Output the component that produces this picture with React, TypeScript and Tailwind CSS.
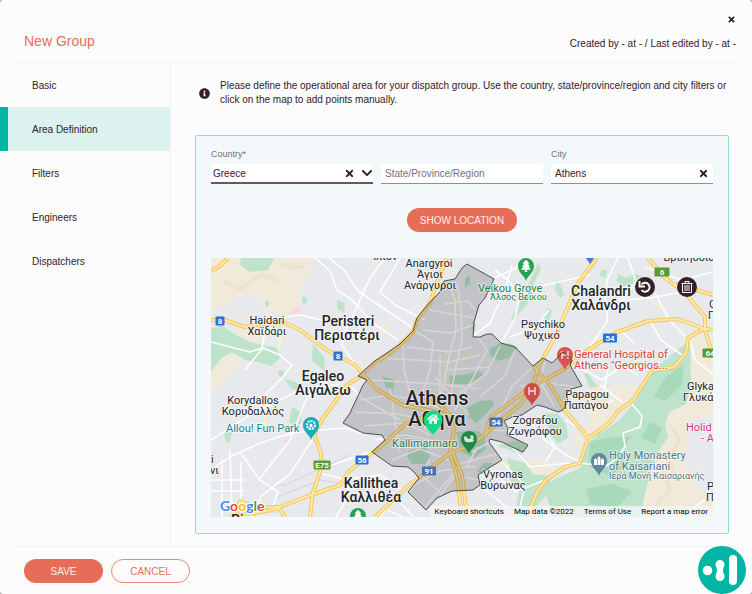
import React from 'react';
import { FaTimes, FaChevronDown, FaInfoCircle, FaHome, FaTree } from 'react-icons/fa';

const tabs = ['Basic', 'Area Definition', 'Filters', 'Engineers', 'Dispatchers'];

const sandAreas = [
  'M211 258H315L311 270 302 285 300 300 292 312 272 313 262 305 255 293 238 297 222 306 211 310Z',
  'M211 357L226 352 242 357 241 366 230 373 221 388 211 390Z',
  'M231 326L246 330 258 336 262 345 246 341Z',
  'M588 386H640L620 412 600 430 585 447 573 449 574 438 590 422Z',
  'M684 338L696 330 706 345 713 352V517H640L650 470 664 440Z',
  'M519 463L534 458 552 463 550 476 528 474Z',
  'M448 358L462 355 473 350 470 357 452 362Z',
  'M449 296L459 292 459 305 455 308Z',
  'M378 324L390 323 388 331 382 331Z',
];

const greenAreas = [
  'M241 258H274L268 270 250 272 240 265Z',
  'M211 329L222 325 234 334 250 342 262 345 277 348 280 358 271 366 258 362 245 360 232 352 222 357 211 372Z',
  'M313 344L319 351 324 357 325 372 312 360Z',
  'M265 302L269 300 269 306 266 307Z',
  'M302 296L307 298 306 304 302 303Z',
  'M337 300L345 303 344 313 337 309Z',
  'M278 370L284 371 284 378 279 376Z',
  'M284 379L296 382 303 390 292 389Z',
  'M292 407L300 412 302 423 294 427 289 421Z',
  'M224 433L232 432 229 444 225 439Z',
  'M538 263L541 269 535 281 530 294 527 305 520 312 513 322 511 318 519 304 527 288Z',
  'M547 307L552 311 549 321 544 320 546 313Z',
  'M556 280L561 285 564 295 560 298 555 290Z',
  'M602 269L607 271 606 278 599 276Z',
  'M618 274L626 278 634 274 642 276 634 284 624 286 617 281Z',
  'M584 374L588 372 594 382 598 387 590 388Z',
  'M545 413L558 414 566 424 568 438 558 444 550 434Z',
  'M507 458L525 463 533 474 550 476 552 490 540 502 530 517H514L519 492 511 482Z',
  'M496 446L518 440 528 446 520 456 508 449Z',
  'M690 340L691 386 686 404 669 412 665 424 668 437 656 455 649 478 644 498 640 517H553L546 494 553 480 580 468 586 445 600 433 620 420 636 400 646 382 658 366Z',
];

const darkGreenAreas = [
  'M590 442L606 438 632 436 620 450 626 465 610 476 588 466Z',
  'M586 489L612 484 632 491 617 508 590 504Z',
  'M665 378L684 364 682 385 665 401 654 397Z',
  'M650 422L662 428 655 444 641 438Z',
];

const parksInside = [
  'M449 376L462 375 480 371 484 376 473 384 450 384Z',
  'M490 349L500 343 512 344 518 348 509 358 497 361 490 355Z',
  'M465 279L470 275 470 284 465 287Z',
  'M472 322L476 325 475 331 471 329Z',
  'M467 408L480 401 492 400 494 405 486 414 476 423 469 417Z',
  'M409 451L425 447 430 455 425 464 412 464 407 457Z',
  'M456 432L478 431 485 438 486 449 474 458 461 452Z',
  'M382 376L394 380 393 391 386 387Z',
  'M483 463L493 463 485 474 477 472Z',
];

const minorRoads = [
  'M315 258L330 271 337 290 352 300 374 324 398 340',
  'M329 258L345 271 358 291 380 306 416 330',
  'M385 258L370 278 360 300 345 332 342 345 360 372',
  'M400 258L380 292 395 305 425 320',
  'M211 470C235 450 280 435 300 432L345 428 365 434',
  'M211 440L250 415 300 390 340 384',
  'M211 342L250 352 262 348 265 330 280 318 300 315 330 322',
  'M245 370L263 348 280 355 292 365 282 378 262 398 240 414',
  'M211 480H245M211 491H244M222 460V517M230 450L232 510M241 462V500',
  'M250 517L262 495 290 474 312 440',
  'M240 452L260 480 278 492 272 509',
  'M260 478L290 440 306 400 317 385',
  'M322 474L350 480 345 502 336 517M332 465L370 452',
  'M350 386L365 400 400 420M340 480L380 475 405 492',
  'M380 517L395 495M388 510L402 517M400 503L414 517',
  'M445 304L468 301 475 310M472 337L490 323 505 290 512 265',
  'M494 278L512 270 530 258M502 342L515 318 520 296 545 285 590 275',
  'M520 296L508 280 495 270M510 337L535 328 549 310',
  'M585 305L600 306 618 300 650 298 682 292',
  'M590 346L607 322 608 303M620 330L635 344M650 321L661 340 682 355',
  'M618 258L607 280 605 303M628 258L636 282 615 309',
  'M645 267L682 280 713 272M655 293L670 321 686 337',
  'M590 350L608 370 604 390M578 367L602 380 622 366 638 375',
  'M600 385L622 402M614 400L590 412',
  'M525 415L545 440 566 455 580 462M512 447L530 467 570 463',
  'M490 470L515 492 545 480M482 487L510 510M500 460L525 485 518 517',
  'M545 430L555 447 545 462M566 420L582 430',
  'M632 404L642 416 640 427 623 433 625 447 615 460 606 466 580 463',
  'M690 510L705 500M690 340L695 360 713 374',
];

const cityRoads = [
  'M447 281L455 300 456 330 449 357 443 390 424 430',
  'M457 283L461 308 462 340 455 370 450 402',
  'M430 310L458 315 474 318M423 330L450 333 473 325M407 347L450 352 473 347',
  'M415 331L433 342 430 370 420 400M403 345L404 370 412 401',
  'M380 358L416 360 450 362 480 355M370 380L404 382 440 384 478 389',
  'M360 400L390 395 425 402 450 412M355 412L398 414 430 421',
  'M365 426L405 423 430 435M375 440L405 435 440 442M392 460L420 449 448 460',
  'M478 337L487 350 472 380 455 410M500 346L486 374 460 393',
  'M515 350L505 376 480 397M533 367L512 386 498 416 485 430',
  'M410 487L440 471 475 466M425 507L448 480 462 463 497 454',
  'M421 475L442 494M410 492L430 460M440 496L455 475 478 480',
  'M545 362L540 382 555 407M520 386L550 383 575 387',
  'M491 430L516 431M472 452L490 442M466 467L478 447',
  'M390 388L399 450M440 355L440 395M445 370L490 367M435 377L469 415',
];

const highways = [
  'M211 320H225L245 327 262 324 285 323 300 330 325 349 340 357 355 365 375 388 402 405 438 412 452 417',
  'M211 271L220 266 228 258',
  'M447 258L438 280 430 303 417 320 413 332 400 345 385 357 375 362 358 378 347 385 327 413Q314 430 315 437L321 453Q322 463 320 472L313 492 310 517',
  'M230 517L272 510 308 496 340 485 348 472 385 443 405 424 430 414',
  'M375 517L408 486 450 453 454 430 450 415 438 403 420 400',
  'M450 453L457 478 462 517M453 453L462 475 467 517',
  'M450 453L466 447 485 435 497 423 520 405 533 385 538 367 555 337 578 283 597 258',
  'M485 435L491 417 512 401 532 386 545 380 567 367 588 350 617 332 648 321 678 319 702 328 713 330',
  'M533 366L550 385 565 410 588 438',
  'M648 258L664 277 685 293 705 317V330L710 346Q713 352 709 358',
  'M675 284L697 290 713 295',
  'M705 328L688 338 686 353 674 367 652 371 642 386 633 400 617 412 612 420 600 430 588 438 580 463 565 467 546 480 537 492 527 517',
  'M236 517L240 501 258 508 278 507 285 517',
];

type Label = { x: number; y: number; text: string; size?: 'lg' | 'xl' | 'sm'; color?: string; start?: boolean };

const labels: Label[] = [
  { x: 385, y: 260, text: 'Ίλιον' },
  { x: 429, y: 267, text: 'Anargyroi' },
  { x: 430, y: 278, text: 'Άγιοι' },
  { x: 430, y: 289, text: 'Ανάργυροι' },
  { x: 478, y: 292, text: 'Veikou Grove', color: '#188544', start: true },
  { x: 490, y: 300, text: 'Άλσος Βεΐκου', color: '#188544', size: 'sm', start: true },
  { x: 601, y: 296, text: 'Chalandri', size: 'lg' },
  { x: 601, y: 310, text: 'Χαλάνδρι', size: 'lg' },
  { x: 689, y: 261, text: 'Βριλήσσια' },
  { x: 267, y: 324, text: 'Haidari' },
  { x: 267, y: 335, text: 'Χαϊδάρι' },
  { x: 348, y: 326, text: 'Peristeri', size: 'lg' },
  { x: 347, y: 340, text: 'Περιστέρι', size: 'lg' },
  { x: 323, y: 381, text: 'Egaleo', size: 'lg' },
  { x: 323, y: 395, text: 'Αιγάλεω', size: 'lg' },
  { x: 543, y: 328, text: 'Psychiko' },
  { x: 542, y: 339, text: 'Ψυχικό' },
  { x: 574, y: 358, text: 'General Hospital of', color: '#d9413c', start: true },
  { x: 574, y: 369, text: 'Athens "Georgios...', color: '#d9413c', start: true },
  { x: 587, y: 398, text: 'Papagou' },
  { x: 586, y: 409, text: 'Παπάγου' },
  { x: 437, y: 405, text: 'Athens', size: 'xl' },
  { x: 437, y: 426, text: 'Αθήνα', size: 'xl' },
  { x: 535, y: 424, text: 'Zografou' },
  { x: 535, y: 435, text: 'Ζωγράφου' },
  { x: 392, y: 447, text: 'Kallimarmaro', color: '#2f7d4f', start: true },
  { x: 503, y: 478, text: 'Vyronas' },
  { x: 503, y: 489, text: 'Βύρωνας' },
  { x: 371, y: 488, text: 'Kallithea', size: 'lg' },
  { x: 371, y: 502, text: 'Καλλιθέα', size: 'lg' },
  { x: 253, y: 404, text: 'Korydallos' },
  { x: 253, y: 415, text: 'Κορυδαλλός' },
  { x: 226, y: 432, text: 'Allou! Fun Park', color: '#138a94', start: true },
  { x: 609, y: 459, text: 'Holy Monastery', color: '#58748a', start: true },
  { x: 609, y: 470, text: 'of Kaisariani', color: '#58748a', start: true },
  { x: 609, y: 479, text: 'Ιερά Μονή Καισαριανής', color: '#58748a', size: 'sm', start: true },
  { x: 687, y: 390, text: 'Glyka', start: true },
  { x: 683, y: 401, text: 'Γλυκά', start: true },
  { x: 686, y: 431, text: 'Holid', color: '#e6317c', start: true },
  { x: 701, y: 442, text: '- A', color: '#e6317c', start: true },
  { x: 709, y: 308, text: 'G', start: true },
  { x: 708, y: 319, text: 'Γ', start: true },
  { x: 707, y: 490, text: 'P', start: true },
  { x: 706, y: 501, text: 'Π', start: true },
  { x: 211, y: 463, text: 'i', start: true },
  { x: 210, y: 474, text: 'νι', start: true },
  { x: 231, y: 525, text: 'Piraeus', size: 'lg', start: true },
];

const labelSize = { sm: 'text-[9px]', lg: 'text-[14px] font-medium', xl: 'text-[20px] font-medium' };

const shields = [
  { x: 220, y: 321, text: '8', w: 9, color: '#2f6fd0' },
  { x: 338, y: 356, text: '8', w: 9, color: '#2f6fd0' },
  { x: 610, y: 338, text: '54', w: 14, color: '#2f6fd0' },
  { x: 496, y: 422, text: '54', w: 13, color: '#4470b4' },
  { x: 362, y: 460, text: '56', w: 13, color: '#2f6fd0' },
  { x: 429, y: 471, text: '91', w: 14, color: '#4470b4' },
  { x: 322, y: 465, text: 'E75', w: 17, color: '#5a9a32' },
  { x: 662, y: 272, text: '6', w: 15, color: '#5a9a32' },
  { x: 710, y: 353, text: '64', w: 15, color: '#5a9a32' },
];

const Pin = ({ x, y, color, children }: { x: number; y: number; color: string; children: React.ReactNode }) => (
  <g transform={`translate(${x} ${y})`}>
    <path d="M0 15C-1 10-8 7-8 0A8 8 0 1 1 8 0C8 7 1 10 0 15Z" fill={color} />
    {children}
  </g>
);

const cityBoundary =
  'M467 264L494 279 485 298 479 305 474 322 473 337H480L487 334H492L501 343 515 347 533 366 543 358 552 363 563 352 572 360 570 365 582 386 571 389 566 394 568 401 563 410 558 412 545 407 537 405 522 415 512 417 504 421 508 428 507 435 518 440 528 445 523 452 512 447 502 442 490 439 489 442 502 460 492 466 478 475 480 485 473 490 452 491 437 498 426 510 408 492 419 478 414 472 408 467 392 466 372 452 385 440 382 435 363 433 343 423 350 413 363 385 367 380 358 376 375 361 400 344 413 331 417 318 430 302 440 292 444 281 455 279 462 268Z';

const AreaMap = () => (
  <svg viewBox="211 258 502 259" className="block w-full h-auto" role="img" aria-label="Map of Athens">
    <rect x="211" y="258" width="502" height="259" fill="#e7e9ec" />
    {sandAreas.map((d) => <path key={d} d={d} fill="#f1e9d9" />)}
    <path d="M223 281L240 289 260 275 278 280M280 264L293 268 304 266M670 425L680 440 668 459 675 475M662 466L670 490 655 506" stroke="#ebe2d0" strokeWidth="4" fill="none" />
    {greenAreas.map((d) => <path key={d} d={d} fill="#bde3ca" />)}
    {darkGreenAreas.map((d) => <path key={d} d={d} fill="#a9d9bb" />)}
    <path d="M292 308L301 306 299 313 290 314ZM284 440L290 437 289 443 285 445Z" fill="#f8d8db" />
    <path d="M690 420L713 416V498L695 486 684 462 688 445Z" fill="#e7e9ec" />
    <path d="M255 517Q258 482 285 485L350 455M275 498L320 480 345 484" stroke="#d2d5da" strokeWidth="1" fill="none" />
    {parksInside.map((d) => <path key={d} d={d} fill="#b4e0c4" />)}
    <g fill="none" stroke="#ffffff" strokeWidth="1.6" strokeLinejoin="round">
      {minorRoads.map((d) => <path key={d} d={d} />)}
      {cityRoads.map((d) => <path key={d} d={d} />)}
    </g>
    <path d="M278 350L282 335 287 322M264 425L268 398M495 460L510 466M652 300L664 312M445 358L443 385M400 404L409 430" stroke="#fbf1cb" strokeWidth="2" fill="none" />
    <g fill="none" strokeLinejoin="round">
      {highways.map((d) => <path key={d} d={d} stroke="#f7c55c" strokeWidth="4" />)}
      {highways.map((d) => <path key={d} d={d} stroke="#fde9a6" strokeWidth="2" />)}
    </g>
    <path d={cityBoundary} fill="#000000" fillOpacity="0.16" stroke="#4d4d4d" strokeWidth="1" />
    <path d="M586 258H594L590 264Z" fill="#3d7be0" />

    {shields.map((s) => (
      <g key={`${s.text}-${s.x}`}>
        <rect x={s.x - s.w / 2} y={s.y - 4.5} width={s.w} height="9" rx="1" fill={s.color} />
        <text x={s.x} y={s.y + 3} textAnchor="middle" fill="#ffffff" className="text-[8px] font-bold">{s.text}</text>
      </g>
    ))}

    {labels.map((l) => (
      <text
        key={`${l.text}-${l.y}`}
        x={l.x}
        y={l.y}
        textAnchor={l.start ? 'start' : 'middle'}
        fill={l.color ?? '#222426'}
        stroke="#ffffff"
        strokeOpacity="0.5"
        strokeWidth="2"
        className={`[paint-order:stroke] ${l.size ? labelSize[l.size] : 'text-[11px]'}`}
      >
        {l.text}
      </text>
    ))}

    <Pin x={526} y={266} color="#26a454"><FaTree x={-6} y={-6} size={12} color="#ffffff" /></Pin>
    <Pin x={358} y={516} color="#26a454"><FaTree x={-6} y={-6} size={12} color="#ffffff" /></Pin>
    <g fillOpacity="0.95">
      <Pin x={565} y={355} color="#dc4d48"><path d="M-3-4V4M3-4V4M-3 0H3" stroke="#f6dddd" strokeWidth="1.5" /></Pin>
      <Pin x={532} y={391} color="#cf4642"><path d="M-3-4V4M3-4V4M-3 0H3" stroke="#f0dcdc" strokeWidth="1.5" /></Pin>
      <path d="M552 363L563 352 572 360 570 365" stroke="#4d4d4d" fill="none" />
    </g>
    <Pin x={469} y={439} color="#23874a">
      <path d="M-5-2L-3-3-2-1 0 0 2-1 1-3 3-4 5-2 4 0 5 2Q3 4-3 3Q-5 2-5-2Z" fill="#d5eadc" />
    </Pin>
    <Pin x={311} y={425} color="#1aacbc">
      <circle r="4" fill="none" stroke="#ffffff" strokeWidth="2" strokeDasharray="2 1" />
      <path d="M0-1L-2 5M0-1L2 5" stroke="#ffffff" />
      <circle r="1.5" fill="#ffffff" />
    </Pin>
    <Pin x={599} y={461} color="#64869c">
      <path d="M-5 4V-1L-3.5-3-2-1V4ZM-1.5 4V-3L0-5 1.5-3V4ZM2 4V-1L3.5-3 5-1V4Z" fill="#ffffff" />
    </Pin>
    <g transform="translate(433 420)">
      <path d="M0 15L-8 5A9.5 9.5 0 1 1 8 5Z" fill="#0fdb87" />
      <FaHome x={-6} y={-7} size={12} color="#ffffff" />
    </g>

    <text x="220" y="511" stroke="#ffffff" strokeWidth="2" className="font-['Lato',sans-serif] text-[14px] font-bold [paint-order:stroke]">
      <tspan fill="#4285f4">G</tspan>
      <tspan fill="#ea4335">o</tspan>
      <tspan fill="#fbbc05">o</tspan>
      <tspan fill="#4285f4">g</tspan>
      <tspan fill="#34a853">l</tspan>
      <tspan fill="#ea4335">e</tspan>
    </text>
  </svg>
);

const App = () => {
  return (
    <div className="min-h-screen flex bg-[#b5b5b5] font-['Liberation_Sans',Arial,sans-serif] text-[10px] text-[#33202a]">
      <div className="relative flex-1 min-w-0 flex flex-col rounded-sm bg-[#fcfcfc]">
        <header className="mx-4 h-[63px] pl-2 flex justify-between border-b border-[#f1f1f1]">
          <h1 className="pt-8 text-[14px] leading-[18px] text-[#e66d58]">New Group</h1>
          <div className="flex flex-col items-end gap-3 pt-3">
            <button aria-label="Close" className="h-3.5 flex items-center">
              <FaTimes size={9} />
            </button>
            <p className="leading-3">Created by - at - / Last edited by - at -</p>
          </div>
        </header>

        <div className="flex-1 flex">
          <nav className="w-[171px] shrink-0 flex flex-col border-r border-[#f1f1f1]">
            {tabs.map((tab) => (
              <button
                key={tab}
                className={`h-11 text-left border-l-8 pl-6 ${
                  tab === 'Area Definition' ? 'border-[#00b5a3] bg-[#dbf2ee]' : 'border-transparent'
                }`}
              >
                {tab}
              </button>
            ))}
          </nav>

          <main className="flex-1 min-w-0 pt-4 pl-6 pr-[23px] pb-3">
            <div className="flex items-center gap-2.5 pl-1 mb-7">
              <FaInfoCircle size={11} className="shrink-0" />
              <p className="leading-[14px]">
                Please define the operational area for your dispatch group. Use the country, state/province/region and city filters or
                click on the map to add points manually.
              </p>
            </div>

            <section className="rounded-xs border border-[#8fdcd2] bg-[#f3f9fa] px-[15px] pt-3 pb-4">
              <div className="grid grid-cols-3 gap-2 items-end">
                <div>
                  <label htmlFor="country" className="block mb-1 text-[9px] leading-3 text-[#77707a]">Country*</label>
                  <div className="relative flex items-center h-5 bg-white border-b-2 border-[#6b565e]">
                    <select id="country" defaultValue="Greece" className="w-full h-full appearance-none bg-transparent pl-0.5 outline-none">
                      <option>Greece</option>
                    </select>
                    <button aria-label="Clear country" className="absolute right-[18px]">
                      <FaTimes size={11} />
                    </button>
                    <FaChevronDown size={12} className="absolute right-0 pointer-events-none" />
                  </div>
                </div>
                <input
                  aria-label="State/Province/Region"
                  placeholder="State/Province/Region"
                  className="w-full h-5 bg-white border-b border-[#978c91] px-1 outline-none placeholder:text-[#77707a]"
                />
                <div>
                  <label htmlFor="city" className="block mb-1 text-[9px] leading-3 text-[#77707a]">City</label>
                  <div className="flex items-center h-5 bg-white border-b border-[#978c91] px-1">
                    <input id="city" defaultValue="Athens" className="flex-1 min-w-0 bg-transparent outline-none" />
                    <button aria-label="Clear city">
                      <FaTimes size={11} />
                    </button>
                  </div>
                </div>
              </div>

              <div className="flex justify-center mt-6 mb-[26px]">
                <button className="h-6 px-[13px] rounded-full bg-[#e66d58] text-[#fdeeeb]">SHOW LOCATION</button>
              </div>

              <div className="relative overflow-hidden font-['Roboto',sans-serif]">
                <AreaMap />
                <div className="absolute top-[19px] right-4 flex gap-[22px]">
                  <button aria-label="Undo last point" className="size-5 rounded-full bg-[#33202a] text-white flex items-center justify-center">
                    <svg width="14" height="14" viewBox="0 0 14 14" fill="none" stroke="currentColor">
                      <path d="M3.500 4.500A4.500 4.500 0 1 1 3.500 10" strokeWidth="2" />
                      <path d="M1.500 1V6.500H7" strokeWidth="2" />
                    </svg>
                  </button>
                  <button aria-label="Delete area" className="size-5 rounded-full bg-[#33202a] text-white flex items-center justify-center">
                    <svg width="14" height="14" viewBox="0 0 14 14" fill="none" stroke="currentColor">
                      <path d="M1.500 3.500H12.500M5 3.500V1.500H9V3.500M2.500 3.500V12.500H11.500V3.500M5 5V11M7 5V11M9 5V11" />
                    </svg>
                  </button>
                </div>
                <div className="absolute bottom-0 right-0 flex bg-[#f5f5f5]/80 text-[8px] leading-[11px] text-black">
                  <button className="px-[5px]">Keyboard shortcuts</button>
                  <span className="px-[5px]">Map data ©2022</span>
                  <a href="#terms" className="px-[5px]">Terms of Use</a>
                  <a href="#report" className="px-[5px]">Report a map error</a>
                </div>
              </div>
            </section>
          </main>
        </div>

        <footer className="mx-4 h-12 pl-2 pt-3 flex gap-2 border-t border-[#f1f1f1]">
          <button className="w-[79px] h-6 rounded-full bg-[#e66d58] text-[#fdeeeb]">SAVE</button>
          <button className="w-[79px] h-6 rounded-full border border-[#e98a79] text-[#e66d58]">CANCEL</button>
        </footer>

        <button aria-label="Open assistant" className="absolute right-1.5 bottom-0">
          <svg width="48" height="48" viewBox="0 0 48 48">
            <circle cx="24" cy="24" r="24" fill="#00b5a3" />
            <circle cx="9.500" cy="24.500" r="4.800" fill="#ffffff" />
            <path d="M17.500 18.500A4.500 4.500 0 1 1 26.500 18.500C26.500 21 25 22 25 24.500S26.500 28 26.500 30.500A4.500 4.500 0 1 1 17.500 30.500C17.500 28 19 27 19 24.500S17.500 21 17.500 18.500Z" fill="#ffffff" />
            <rect x="31" y="9" width="8" height="30" rx="4" fill="#ffffff" />
          </svg>
        </button>
      </div>
    </div>
  );
};

export default App;
